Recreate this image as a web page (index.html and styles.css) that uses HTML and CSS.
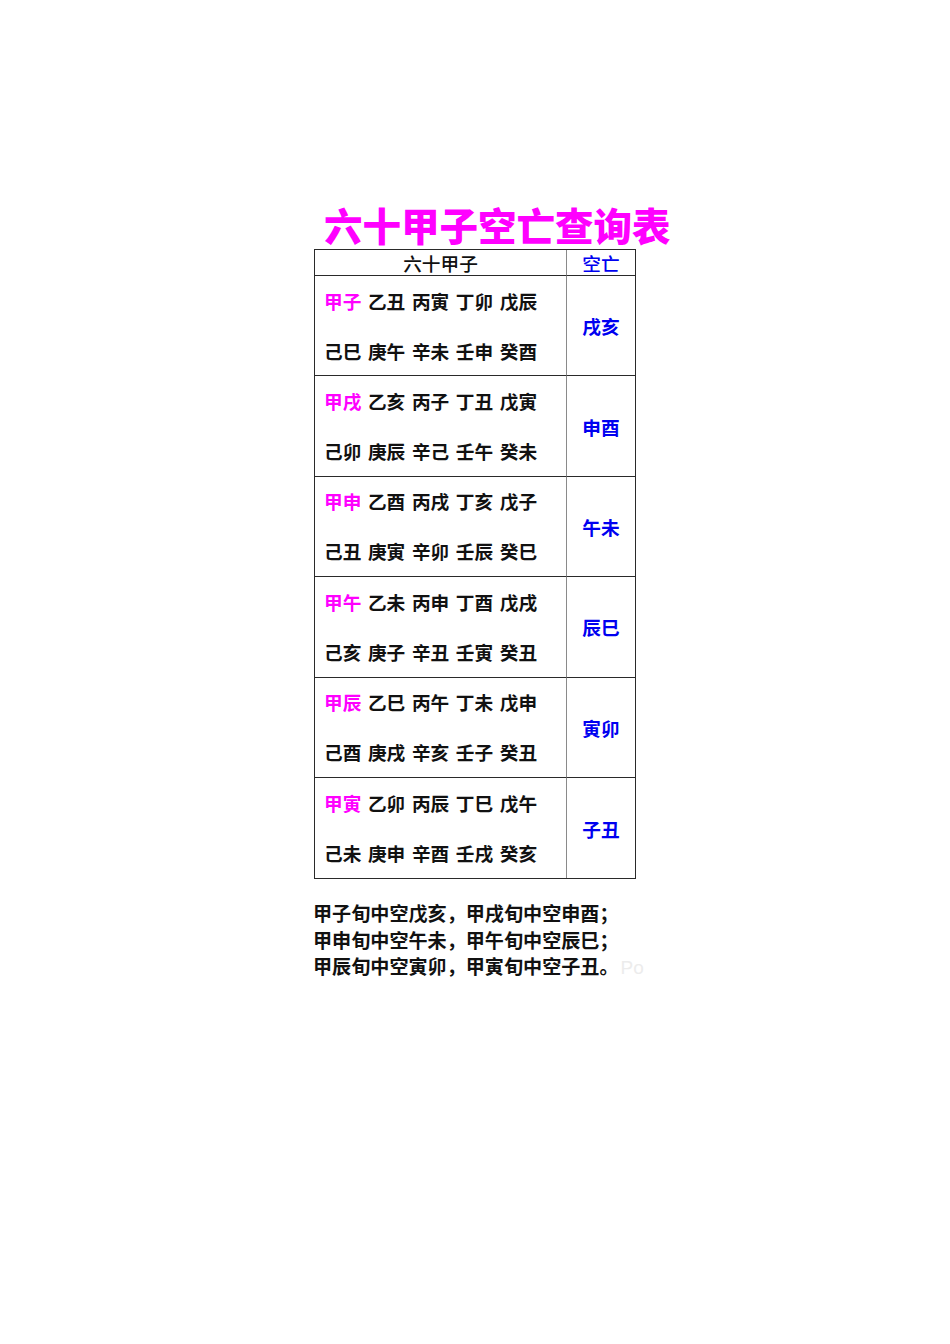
FILE: index.html
```html
<!DOCTYPE html>
<html lang="zh-CN">
<head>
<meta charset="utf-8">
<title>六十甲子空亡查询表</title>
<link rel="stylesheet" href="styles.css">
</head>
<body>
<div class="page">
  <h1 class="title">六十甲子空亡查询表</h1>
  <div class="table">
    <div class="cell head main">六十甲子</div>
    <div class="cell head side">空亡</div>

    <div class="cell main"><div><span class="hl">甲子</span> 乙丑 丙寅 丁卯 戊辰</div><div>己巳 庚午 辛未 壬申 癸酉</div></div>
    <div class="cell side">戌亥</div>

    <div class="cell main"><div><span class="hl">甲戌</span> 乙亥 丙子 丁丑 戊寅</div><div>己卯 庚辰 辛己 壬午 癸未</div></div>
    <div class="cell side">申酉</div>

    <div class="cell main"><div><span class="hl">甲申</span> 乙酉 丙戌 丁亥 戊子</div><div>己丑 庚寅 辛卯 壬辰 癸巳</div></div>
    <div class="cell side">午未</div>

    <div class="cell main"><div><span class="hl">甲午</span> 乙未 丙申 丁酉 戊戌</div><div>己亥 庚子 辛丑 壬寅 癸丑</div></div>
    <div class="cell side">辰巳</div>

    <div class="cell main"><div><span class="hl">甲辰</span> 乙巳 丙午 丁未 戊申</div><div>己酉 庚戌 辛亥 壬子 癸丑</div></div>
    <div class="cell side">寅卯</div>

    <div class="cell main last"><div><span class="hl">甲寅</span> 乙卯 丙辰 丁巳 戊午</div><div>己未 庚申 辛酉 壬戌 癸亥</div></div>
    <div class="cell side last">子丑</div>
  </div>
  <div class="notes">
    <p>甲子旬中空戊亥，甲戌旬中空申酉；</p>
    <p>甲申旬中空午未，甲午旬中空辰巳；</p>
    <p>甲辰旬中空寅卯，甲寅旬中空子丑。<span class="wm">Po</span></p>
  </div>
</div>
</body>
</html>
```

FILE: styles.css
```css
html, body {
  margin: 0;
  padding: 0;
  background: #ffffff;
}

body {
  font-family: "Noto Sans CJK SC", "Noto Sans", sans-serif;
  color: #111111;
}

.page {
  padding: 204px 0 0 314px;
}

.title {
  margin: 0 0 5px 10px;
  font-size: 38.5px;
  line-height: 40px;
  font-weight: 900;
  color: #ff00ff;
  letter-spacing: 0;
  white-space: nowrap;
}

.table {
  display: grid;
  grid-template-columns: 252px 68px;
  grid-template-rows: 26px repeat(6, 100.4px);
  width: 322px;
  box-sizing: border-box;
  border: 1px solid #2a2a2a;
}

.cell {
  border-bottom: 1px solid #2a2a2a;
  box-sizing: border-box;
  font-size: 18.67px;
  font-weight: 700;
}

.cell.last {
  border-bottom: none;
}

.main {
  border-right: 1px solid #8a8a8a;
  padding-left: 9px;
  display: flex;
  flex-direction: column;
  justify-content: center;
  line-height: 50px;
  word-spacing: 2.4px;
  white-space: nowrap;
}

.side {
  display: flex;
  align-items: center;
  justify-content: center;
  color: #0000f0;
}

.head {
  font-weight: 500;
  line-height: 24px;
}

.head.main {
  padding-left: 0;
  align-items: center;
}

.head.side {
  color: #0000f0;
}

.hl {
  color: #ff00ff;
}

.notes {
  margin: 21px 0 0 -1px;
  font-size: 19.1px;
  font-weight: 700;
  line-height: 26.5px;
  color: #111111;
}

.notes p {
  margin: 0;
  white-space: nowrap;
}

.wm {
  color: #ececec;
  font-weight: 400;
  font-family: "Liberation Sans", sans-serif;
  font-size: 19px;
  margin-left: 2px;
}
```
